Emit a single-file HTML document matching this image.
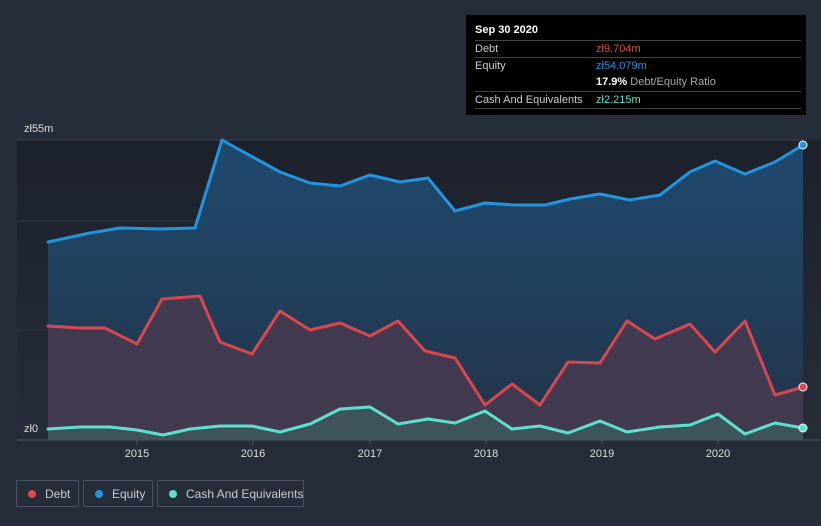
<!DOCTYPE html><html><head><style>
body{margin:0;background:#262d3a;font-family:"Liberation Sans",sans-serif;}
.w{position:relative;width:821px;height:526px;overflow:hidden;}
.tt{position:absolute;left:466px;top:15px;width:340px;height:100px;background:#000;color:#ccc;font-size:11px}
.tt .h{position:absolute;left:9px;top:9px;color:#fff;font-weight:bold}
.r{position:absolute;left:9px;width:326px;border-top:1px solid #444;height:17px;line-height:17px;white-space:nowrap}
.r span{position:absolute;left:121px}
.lg{position:absolute;top:480px;height:27px;border:1px solid #4a5160;border-radius:2px;color:#ccc;font-size:12px;line-height:26px;box-sizing:border-box;white-space:nowrap}
.lg i{position:absolute;left:11px;top:9px;width:8px;height:8px;border-radius:50%}
.lg b{font-weight:normal;position:absolute;left:28px}
</style></head><body><div class="w">
<svg width="821" height="526" style="position:absolute;left:0;top:0">
<defs><linearGradient id="bg" x1="0" y1="0" x2="0" y2="1"><stop offset="0" stop-color="#1c212b"/><stop offset="1" stop-color="#262d3a"/></linearGradient>
<linearGradient id="eq" x1="0" y1="0" x2="0" y2="1"><stop offset="0" stop-color="#1f4a6e"/><stop offset="1" stop-color="#243449"/></linearGradient></defs>
<rect x="17" y="140" width="804" height="300" fill="url(#bg)"/>
<line x1="17" y1="140" x2="803" y2="140" stroke="#3a4150"/>
<line x1="17" y1="221" x2="803" y2="221" stroke="#2f3644"/>
<line x1="17" y1="330" x2="803" y2="330" stroke="#2f3644"/>
<polygon fill="url(#eq)" points="48,242 90,233 120,228 160,229 195,228 222,140 240,150 280,172 310,183 340,186 370,175 400,182 428,178 455,211 485,203 515,205 545,205 570,199 600,194 630,200 660,195 690,172 715,161 745,174 775,162 803,145 803,440 48,440"/>
<polygon fill="#463b50" fill-opacity="0.9" points="48,326 80,328 105,328 137,344 162,299 200,296 220,342 252,354 280,311 310,330 340,323 370,336 398,321 425,351 455,358 485,405 512,384 540,405 568,362 600,363 627,321 655,339 690,324 715,352 745,321 775,395 803,387 803,440 48,440"/>
<polygon fill="#3d5a5e" fill-opacity="0.8" points="48,429 80,427 110,427 137,430 163,435 190,429 220,426 252,426 280,432 310,424 340,409 370,407 398,424 428,419 455,423 485,411 512,429 540,426 568,433 600,421 627,432 660,427 690,425 718,414 745,434 775,423 803,428 803,440 48,440"/>
<g fill="none" stroke-width="3" stroke-linejoin="round" stroke-linecap="round">
<polyline stroke="#2394e0" points="48,242 90,233 120,228 160,229 195,228 222,140 240,150 280,172 310,183 340,186 370,175 400,182 428,178 455,211 485,203 515,205 545,205 570,199 600,194 630,200 660,195 690,172 715,161 745,174 775,162 803,145"/>
<polyline stroke="#d9474f" points="48,326 80,328 105,328 137,344 162,299 200,296 220,342 252,354 280,311 310,330 340,323 370,336 398,321 425,351 455,358 485,405 512,384 540,405 568,362 600,363 627,321 655,339 690,324 715,352 745,321 775,395 803,387"/>
<polyline stroke="#5ee0cf" points="48,429 80,427 110,427 137,430 163,435 190,429 220,426 252,426 280,432 310,424 340,409 370,407 398,424 428,419 455,423 485,411 512,429 540,426 568,433 600,421 627,432 660,427 690,425 718,414 745,434 775,423 803,428"/>
</g>
<circle cx="803" cy="145" r="4" fill="#2394e0" stroke="#fff" stroke-width="1"/>
<circle cx="803" cy="387" r="4" fill="#d9474f" stroke="#fff" stroke-width="1"/>
<circle cx="803" cy="428" r="4" fill="#5ee0cf" stroke="#fff" stroke-width="1"/>
<line x1="17" y1="440" x2="821" y2="440" stroke="#4a5160"/>
<g stroke="#4a5160"><line x1="137" y1="440" x2="137" y2="445"/><line x1="253" y1="440" x2="253" y2="445"/><line x1="370" y1="440" x2="370" y2="445"/><line x1="486" y1="440" x2="486" y2="445"/><line x1="602" y1="440" x2="602" y2="445"/><line x1="718" y1="440" x2="718" y2="445"/></g>
<g fill="#ddd" font-size="11" text-anchor="middle" font-family="Liberation Sans"><text x="137" y="457">2015</text><text x="253" y="457">2016</text><text x="370" y="457">2017</text><text x="486" y="457">2018</text><text x="602" y="457">2019</text><text x="718" y="457">2020</text></g>
<text x="24" y="132" fill="#ddd" font-size="11" font-family="Liberation Sans">zł55m</text>
<text x="24" y="432" fill="#ddd" font-size="11" font-family="Liberation Sans">zł0</text>
</svg>
<div class="tt"><div class="h">Sep 30 2020</div>
<div class="r" style="top:25px">Debt<span style="color:#e0474f">zł9.704m</span></div>
<div class="r" style="top:42px">Equity<span style="color:#2394e0">zł54.079m</span></div>
<div class="r" style="top:59px;border:0"><span style="color:#aaa"><b style="color:#fff">17.9%</b> Debt/Equity Ratio</span></div>
<div class="r" style="top:76px">Cash And Equivalents<span style="color:#5ee0cf">zł2.215m</span></div>
<div class="r" style="top:93px;height:0"></div>
</div>
<div class="lg" style="left:16px;width:63px"><i style="background:#e0474f"></i><b>Debt</b></div>
<div class="lg" style="left:83px;width:70px"><i style="background:#2394e0"></i><b>Equity</b></div>
<div class="lg" style="left:157px;width:147px"><i style="background:#5ee0cf"></i><b>Cash And Equivalents</b></div>
</div></body></html>
